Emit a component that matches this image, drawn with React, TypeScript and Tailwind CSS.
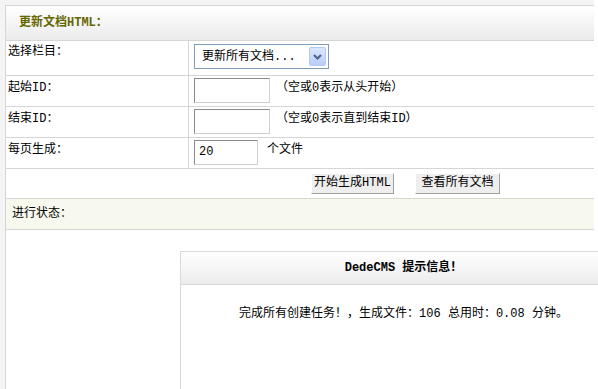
import React from 'react'

// SimSun-like look: half-width latin in a mono face, CJK from Noto
const font = { fontFamily: '"Liberation Mono", "Noto Sans CJK SC", monospace' }

function TextInput({ w, value = '' }: { w: string; value?: string }) {
  return (
    <div
      className={`${w} h-[25px] border border-t-[#8a8a8a] border-l-[#8a8a8a] border-r-[#cfcfcf] border-b-[#cfcfcf] bg-white px-[4px] text-[12px] leading-[23px] text-black`}
    >
      {value}
    </div>
  )
}

function Btn({ children, w }: { children: React.ReactNode; w: string }) {
  return (
    <div
      className={`${w} h-[21px] border border-t-white border-l-white border-r-[#a0a0a0] border-b-[#a0a0a0] bg-[#eeeeee] text-center text-[12px] leading-[19px] text-black`}
    >
      {children}
    </div>
  )
}

export default function App() {
  return (
    <div className="relative h-[389px] w-[598px] overflow-hidden bg-white text-black" style={font}>
      <div className="flex h-full">
        {/* grey gutter on the left */}
        <div className="w-[5px] shrink-0 bg-[#f4f4f4]" />
        <div className="flex flex-1 flex-col">
          <div className="h-[5px] w-[589px] shrink-0 bg-[#f4f4f4]" />
          <div className="flex flex-1 flex-col border-l border-[#d6d6d6]">
            <div className="w-[588px] border-t border-[#d6d6d6]">
              {/* header */}
              <div className="flex h-[35px] items-center border-b border-[#d6d6d6] bg-gradient-to-b from-white to-[#ebebeb] pl-[13px]">
                <span className="text-[12px] font-bold text-[#666600]">更新文档HTML：</span>
              </div>

              <div className="flex h-[35px] border-b border-[#d6d6d6]">
                <div className="w-[183px] border-r border-[#d6d6d6] pl-[2px] pt-[4px] text-[12px] leading-[14px]">
                  选择栏目：
                </div>
                <div className="pl-[5px] pt-[3px]">
                  <div className="flex h-[25px] w-[135px] items-center justify-between border border-[#7f9db9] bg-white pl-[7px] pr-[2px]">
                    <span className="text-[12px] text-black">更新所有文档...</span>
                    <div className="flex h-[19px] w-[17px] items-center justify-center rounded-[2px] border border-[#b4c8f6] bg-gradient-to-b from-[#dce7fd] to-[#b8cdf8]">
                      <svg width="9" height="6" viewBox="0 0 9 6">
                        <path d="M1 1 L4.5 4.5 L8 1" fill="none" stroke="#4d6185" strokeWidth="2" />
                      </svg>
                    </div>
                  </div>
                </div>
              </div>

              <div className="flex h-[31px] border-b border-[#d6d6d6]">
                <div className="w-[183px] border-r border-[#d6d6d6] pl-[2px] pt-[5px] text-[12px] leading-[14px]">
                  起始ID：
                </div>
                <div className="flex items-start pl-[5px] pt-[2px]">
                  <TextInput w="w-[76px]" />
                  <span className="ml-[6px] pt-[3px] text-[12px] leading-[14px]">（空或0表示从头开始）</span>
                </div>
              </div>

              <div className="flex h-[31px] border-b border-[#d6d6d6]">
                <div className="w-[183px] border-r border-[#d6d6d6] pl-[2px] pt-[5px] text-[12px] leading-[14px]">
                  结束ID：
                </div>
                <div className="flex items-start pl-[5px] pt-[2px]">
                  <TextInput w="w-[76px]" />
                  <span className="ml-[6px] pt-[3px] text-[12px] leading-[14px]">（空或0表示直到结束ID）</span>
                </div>
              </div>

              <div className="flex h-[31px] border-b border-[#d6d6d6]">
                <div className="w-[183px] border-r border-[#d6d6d6] pl-[2px] pt-[5px] text-[12px] leading-[14px]">
                  每页生成：
                </div>
                <div className="flex items-start pl-[5px] pt-[2px]">
                  <TextInput w="w-[64px]" value="20" />
                  <span className="ml-[9px] pt-[3px] text-[12px] leading-[14px]">个文件</span>
                </div>
              </div>

              <div className="flex h-[30px] items-start gap-[21px] border-b border-[#d6d6d6] pl-[305px] pt-[4px]">
                <Btn w="w-[83px]">开始生成HTML</Btn>
                <Btn w="w-[85px]">查看所有文档</Btn>
              </div>

              <div className="flex h-[31px] items-center border-b border-[#d6d6d6] bg-[#f8f9ee] pl-[6px] text-[12px]">
                进行状态：
              </div>
            </div>

            {/* result frame */}
            <div className="ml-[174px] mt-[21px] flex w-[446px] flex-1 flex-col border-l border-t border-[#d9d9d9]">
              <div className="flex h-[33px] items-center justify-center border-b border-[#d9d9d9] bg-gradient-to-b from-white to-[#ececec]">
                <span className="text-[12px] font-bold">DedeCMS 提示信息！</span>
              </div>
              <div className="pt-[22px] text-center text-[12px] leading-[14px]">
                完成所有创建任务！，生成文件：106 总用时：0.08 分钟。
              </div>
            </div>
          </div>
        </div>
      </div>
    </div>
  )
}
